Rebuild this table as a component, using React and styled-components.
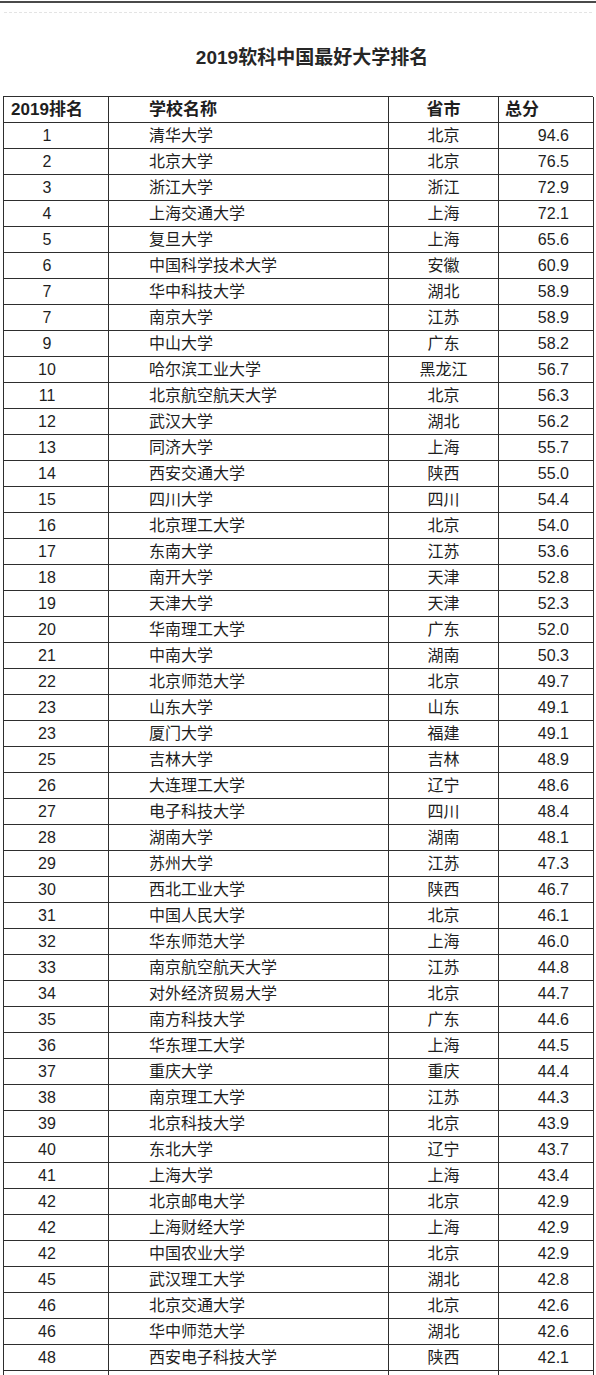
import styled, { createGlobalStyle } from "styled-components";

const GlobalStyle = createGlobalStyle`
    html, body {
        margin: 0;
        padding: 0;
        background: #fff;
        overflow: hidden;
    }
    body {
        font-family: "Liberation Sans", "Noto Sans CJK SC", sans-serif;
        color: #1e1e1e;
    }
`

const rows = [
    ["1", "清华大学", "北京", "94.6"],
    ["2", "北京大学", "北京", "76.5"],
    ["3", "浙江大学", "浙江", "72.9"],
    ["4", "上海交通大学", "上海", "72.1"],
    ["5", "复旦大学", "上海", "65.6"],
    ["6", "中国科学技术大学", "安徽", "60.9"],
    ["7", "华中科技大学", "湖北", "58.9"],
    ["7", "南京大学", "江苏", "58.9"],
    ["9", "中山大学", "广东", "58.2"],
    ["10", "哈尔滨工业大学", "黑龙江", "56.7"],
    ["11", "北京航空航天大学", "北京", "56.3"],
    ["12", "武汉大学", "湖北", "56.2"],
    ["13", "同济大学", "上海", "55.7"],
    ["14", "西安交通大学", "陕西", "55.0"],
    ["15", "四川大学", "四川", "54.4"],
    ["16", "北京理工大学", "北京", "54.0"],
    ["17", "东南大学", "江苏", "53.6"],
    ["18", "南开大学", "天津", "52.8"],
    ["19", "天津大学", "天津", "52.3"],
    ["20", "华南理工大学", "广东", "52.0"],
    ["21", "中南大学", "湖南", "50.3"],
    ["22", "北京师范大学", "北京", "49.7"],
    ["23", "山东大学", "山东", "49.1"],
    ["23", "厦门大学", "福建", "49.1"],
    ["25", "吉林大学", "吉林", "48.9"],
    ["26", "大连理工大学", "辽宁", "48.6"],
    ["27", "电子科技大学", "四川", "48.4"],
    ["28", "湖南大学", "湖南", "48.1"],
    ["29", "苏州大学", "江苏", "47.3"],
    ["30", "西北工业大学", "陕西", "46.7"],
    ["31", "中国人民大学", "北京", "46.1"],
    ["32", "华东师范大学", "上海", "46.0"],
    ["33", "南京航空航天大学", "江苏", "44.8"],
    ["34", "对外经济贸易大学", "北京", "44.7"],
    ["35", "南方科技大学", "广东", "44.6"],
    ["36", "华东理工大学", "上海", "44.5"],
    ["37", "重庆大学", "重庆", "44.4"],
    ["38", "南京理工大学", "江苏", "44.3"],
    ["39", "北京科技大学", "北京", "43.9"],
    ["40", "东北大学", "辽宁", "43.7"],
    ["41", "上海大学", "上海", "43.4"],
    ["42", "北京邮电大学", "北京", "42.9"],
    ["42", "上海财经大学", "上海", "42.9"],
    ["42", "中国农业大学", "北京", "42.9"],
    ["45", "武汉理工大学", "湖北", "42.8"],
    ["46", "北京交通大学", "北京", "42.6"],
    ["46", "华中师范大学", "湖北", "42.6"],
    ["48", "西安电子科技大学", "陕西", "42.1"],
    // the next row is cut by the bottom edge: only its borders show
    ["", "", "", ""],
]

const Page = styled.div`
    padding-top: 1px;
`
const TopRule = styled.div`
    height: 2px;
    background: #4a4a4a;
    margin-bottom: 9px;
`
const DashRule = styled.div`
    height: 0;
    border-top: 1px dashed #e4e4e4;
    margin: 0 4px;
`
const Title = styled.h1`
    margin: 0;
    padding: 32px 0 0 28px;
    height: 83px;
    box-sizing: border-box;
    text-align: center;
    font-size: 19px;
    line-height: 26px;
    font-weight: 700;
    color: #262626;
`
const Table = styled.div`
    margin: 0 3px;
    border-top: 1px solid #2e2e2e;
    border-left: 1px solid #2e2e2e;
`
const Row = styled.div`
    display: grid;
    grid-template-columns: 105px 280px 110px 95px;
    height: 26px;
    font-size: ${p => p.$head ? "17px" : "16px"};
    font-weight: ${p => p.$head ? 700 : 400};
`
const Cell = styled.div`
    border-right: 1px solid #2e2e2e;
    border-bottom: 1px solid #2e2e2e;
    display: flex;
    align-items: center;
    white-space: nowrap;
    overflow: hidden;
    line-height: 1;
`
const RankCell = styled(Cell)`
    justify-content: center;
    padding-right: 18px;
`
const NameCell = styled(Cell)`
    padding-left: 40px;
`
const CityCell = styled(Cell)`
    justify-content: center;
`
const ScoreCell = styled(Cell)`
    justify-content: ${p => p.$head ? "flex-start" : "flex-end"};
    padding: ${p => p.$head ? "0 0 0 6px" : "0 24px 0 0"};
`

const App = () => {
    return (
        <Page>
            <GlobalStyle />
            <TopRule />
            <DashRule />
            <Title>2019软科中国最好大学排名</Title>
            <Table>
                <Row $head>
                    <RankCell>2019排名</RankCell>
                    <NameCell>学校名称</NameCell>
                    <CityCell>省市</CityCell>
                    <ScoreCell $head>总分</ScoreCell>
                </Row>
                {rows.map((r, i) => (
                    <Row key={i}>
                        <RankCell>{r[0]}</RankCell>
                        <NameCell>{r[1]}</NameCell>
                        <CityCell>{r[2]}</CityCell>
                        <ScoreCell>{r[3]}</ScoreCell>
                    </Row>
                ))}
            </Table>
        </Page>
    );
}

export default App;
